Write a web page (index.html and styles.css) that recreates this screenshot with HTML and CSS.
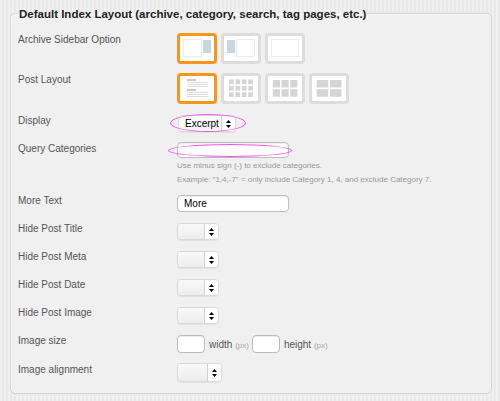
FILE: index.html
```html
<!DOCTYPE html>
<html>
<head>
<title>Default Index Layout</title>
<link rel="stylesheet" href="styles.css">
</head>
<body>

  <fieldset class="box">
    <legend>Default Index Layout (archive, category, search, tag pages, etc.)</legend>

    <div class="row row-tall">
      <label>Archive Sidebar Option</label>
      <div class="choices">
        <div class="choice selected">
          <svg width="34" height="25" viewBox="0 0 34 25">
            <rect x="3.5" y="3.5" width="18" height="17" class="dots"/>
            <rect x="23" y="4" width="8" height="13" class="side"/>
          </svg>
        </div>
        <div class="choice">
          <svg width="34" height="25" viewBox="0 0 34 25">
            <rect x="3" y="4" width="8" height="13" class="side"/>
            <rect x="12.5" y="3.5" width="18" height="17" class="dots"/>
          </svg>
        </div>
        <div class="choice">
          <svg width="34" height="25" viewBox="0 0 34 25">
            <rect x="3.5" y="3.5" width="27" height="17" class="dots"/>
          </svg>
        </div>
      </div>
    </div>

    <div class="row">
      <label>Post Layout</label>
      <div class="choices">
        <div class="choice selected">
          <svg width="34" height="25" viewBox="0 0 34 25">
            <rect x="7" y="3" width="9" height="2" class="head"/>
            <rect x="7" y="6" width="21" height="1" class="line"/>
            <rect x="7" y="8" width="21" height="1" class="line"/>
            <rect x="7" y="10" width="21" height="1" class="line"/>
            <rect x="7" y="13" width="9" height="2" class="head"/>
            <rect x="7" y="16" width="21" height="1" class="line"/>
            <rect x="7" y="18" width="21" height="1" class="line"/>
            <rect x="7" y="20" width="21" height="1" class="line"/>
          </svg>
        </div>
        <div class="choice">
          <svg width="34" height="25" viewBox="0 0 34 25" class="grid">
            <rect x="5" y="3.5" width="4.7" height="4.7"/><rect x="11.4" y="3.5" width="4.7" height="4.7"/><rect x="17.8" y="3.5" width="4.7" height="4.7"/><rect x="24.2" y="3.5" width="4.7" height="4.7"/>
            <rect x="5" y="9.9" width="4.7" height="4.7"/><rect x="11.4" y="9.9" width="4.7" height="4.7"/><rect x="17.8" y="9.9" width="4.7" height="4.7"/><rect x="24.2" y="9.9" width="4.7" height="4.7"/>
            <rect x="5" y="16.3" width="4.7" height="4.7"/><rect x="11.4" y="16.3" width="4.7" height="4.7"/><rect x="17.8" y="16.3" width="4.7" height="4.7"/><rect x="24.2" y="16.3" width="4.7" height="4.7"/>
          </svg>
        </div>
        <div class="choice">
          <svg width="34" height="25" viewBox="0 0 34 25" class="grid">
            <rect x="4.8" y="4" width="7.2" height="7.5"/><rect x="13.5" y="4" width="7.2" height="7.5"/><rect x="22.2" y="4" width="7.2" height="7.5"/>
            <rect x="4.8" y="13.2" width="7.2" height="7.5"/><rect x="13.5" y="13.2" width="7.2" height="7.5"/><rect x="22.2" y="13.2" width="7.2" height="7.5"/>
          </svg>
        </div>
        <div class="choice">
          <svg width="34" height="25" viewBox="0 0 34 25" class="grid">
            <rect x="4.6" y="4" width="11.6" height="7.5"/><rect x="17.8" y="4" width="11.6" height="7.5"/>
            <rect x="4.6" y="13.2" width="11.6" height="7.5"/><rect x="17.8" y="13.2" width="11.6" height="7.5"/>
          </svg>
        </div>
      </div>
    </div>

    <div class="row">
      <label>Display</label>
      <div class="control">
        <div class="select select-display">
          <span class="val">Excerpt</span>
          <span class="arrows"><svg width="5" height="8" viewBox="0 0 5 8"><path d="M2.5 0L5 3H0z M0 5h5L2.5 8z"/></svg></span>
        </div>
        <span class="mark mark-display"></span>
      </div>
    </div>

    <div class="row row-query">
      <label>Query Categories</label>
      <div class="control">
        <div class="input input-wide input-query"></div>
        <span class="mark mark-query"></span>
        <p class="help">Use minus sign (-) to exclude categories.<br>Example: "1,4,-7" = only include Category 1, 4, and exclude Category 7.</p>
      </div>
    </div>

    <div class="row">
      <label>More Text</label>
      <div class="control">
        <div class="input input-wide">More</div>
      </div>
    </div>

    <div class="row">
      <label>Hide Post Title</label>
      <div class="control">
        <div class="select"><span class="val"></span><span class="arrows"><svg width="5" height="8" viewBox="0 0 5 8"><path d="M2.5 0L5 3H0z M0 5h5L2.5 8z"/></svg></span></div>
      </div>
    </div>

    <div class="row">
      <label>Hide Post Meta</label>
      <div class="control">
        <div class="select"><span class="val"></span><span class="arrows"><svg width="5" height="8" viewBox="0 0 5 8"><path d="M2.5 0L5 3H0z M0 5h5L2.5 8z"/></svg></span></div>
      </div>
    </div>

    <div class="row">
      <label>Hide Post Date</label>
      <div class="control">
        <div class="select"><span class="val"></span><span class="arrows"><svg width="5" height="8" viewBox="0 0 5 8"><path d="M2.5 0L5 3H0z M0 5h5L2.5 8z"/></svg></span></div>
      </div>
    </div>

    <div class="row">
      <label>Hide Post Image</label>
      <div class="control">
        <div class="select"><span class="val"></span><span class="arrows"><svg width="5" height="8" viewBox="0 0 5 8"><path d="M2.5 0L5 3H0z M0 5h5L2.5 8z"/></svg></span></div>
      </div>
    </div>

    <div class="row">
      <label>Image size</label>
      <div class="control size">
        <div class="input input-small"></div>
        <span class="unit">width <small>(px)</small></span>
        <div class="input input-small"></div>
        <span class="unit">height <small>(px)</small></span>
      </div>
    </div>

    <div class="row row-last">
      <label>Image alignment</label>
      <div class="control">
        <div class="select select-align"><span class="val"></span><span class="arrows"><svg width="5" height="8" viewBox="0 0 5 8"><path d="M2.5 0L5 3H0z M0 5h5L2.5 8z"/></svg></span></div>
      </div>
    </div>
  </fieldset>

</body>
</html>
```

FILE: styles.css
```css
body, html {
  margin: 0;
  padding: 0;
}

body {
  height: 401px;
  overflow: hidden;
  font-family: "Liberation Sans", Arial, Helvetica, sans-serif;
  background: repeating-linear-gradient(90deg, #f0f0f0 0, #f0f0f0 2px, #e9e9e9 2px, #e9e9e9 4px);
  padding-top: 5px;
  box-sizing: border-box;
}

.box {
  margin: 0 8px 0 10px;
  padding: 11px 0 11px 7px;
  border: 1px solid #d3d3d3;
  border-radius: 5px;
  background: #f0f0f0;
  box-shadow: inset 1px 1px 0 #fafafa;
}

.box legend {
  padding: 1px 1px 0;
  font-size: 11.5px;
  line-height: 16px;
  font-weight: bold;
  color: #222;
}

.row {
  display: grid;
  grid-template-columns: 159px auto;
  align-items: start;
  margin-bottom: 10px;
}

.row-tall { margin-bottom: 9px; }
.row-query { margin-bottom: 7px; }
.row-last { margin-bottom: 0; }

.row label {
  font-size: 10px;
  line-height: 14px;
  color: #555;
}

.control {
  position: relative;
  display: flex;
  flex-direction: column;
  align-items: flex-start;
}

/* layout picker */
.choices {
  display: flex;
  gap: 4px;
}

.choice {
  width: 34px;
  height: 25px;
  border: 3px solid #dddddd;
  border-radius: 4px;
  background: #fff;
}

.choice.selected {
  border-color: #f7961c;
}

.choice svg { display: block; }

.dots {
  fill: none;
  stroke: #d6d6d6;
  stroke-width: 1;
  stroke-dasharray: 1 1;
}

.side { fill: #c6d7df; }
.head { fill: #c8c8c8; }
.line { fill: #dcdcdc; }
.grid rect { fill: #d5d5d5; }

/* selects */
.select {
  display: flex;
  height: 17px;
  margin-top: 1px;
  box-sizing: border-box;
  border: 1px solid #dadada;
  border-radius: 4px;
  background: linear-gradient(#fafafa, #ececec);
  box-shadow: 0 1px 1px rgba(0, 0, 0, 0.06);
}

.select .val {
  width: 26px;
  font-size: 10px;
  line-height: 15px;
  color: #000;
  background: linear-gradient(#f9f9f9, #ededed);
  border-radius: 3px 0 0 3px;
}

.select .arrows {
  width: 13px;
  border-left: 1px solid #d0d0d0;
  display: flex;
  align-items: center;
  justify-content: center;
  background: #fdfdfd;
  border-radius: 0 3px 3px 0;
}

.select-display {
  margin-left: 1px;
}

.select-display .val {
  width: 36px;
  padding-left: 6px;
  background: linear-gradient(#fff, #f2f2f2);
}

.select-align {
  height: 19px;
  margin-top: 0;
}

.select-align .val { width: 29px; }

/* text inputs */
.input {
  box-sizing: border-box;
  height: 17px;
  margin-top: 1px;
  border: 1px solid #bdbdbd;
  border-radius: 4px;
  background: #fff;
  box-shadow: inset 0 1px 1px rgba(0, 0, 0, 0.08);
  font-size: 10px;
  line-height: 15px;
  padding-left: 6px;
  color: #000;
}

.input-wide { width: 112px; }

.input-query {
  height: 16px;
  margin-top: 0;
}

.input-small {
  width: 28px;
  height: 18px;
}

.help {
  margin: 1px 0 0;
  font-size: 8px;
  line-height: 14px;
  color: #999;
}

.size {
  flex-direction: row;
  align-items: center;
}

.unit {
  font-size: 10px;
  color: #555;
  margin: 1px 3px 0 4px;
}

.unit small {
  font-size: 8px;
  color: #aaa;
}

/* pink annotation rings */
.mark {
  position: absolute;
  border: 1px solid #ee55ee;
  border-radius: 50%;
}

.mark-display {
  left: -7px;
  top: 0;
  width: 74px;
  height: 16px;
}

.mark-query {
  left: -9px;
  top: 2px;
  width: 122px;
  height: 11px;
}
```
